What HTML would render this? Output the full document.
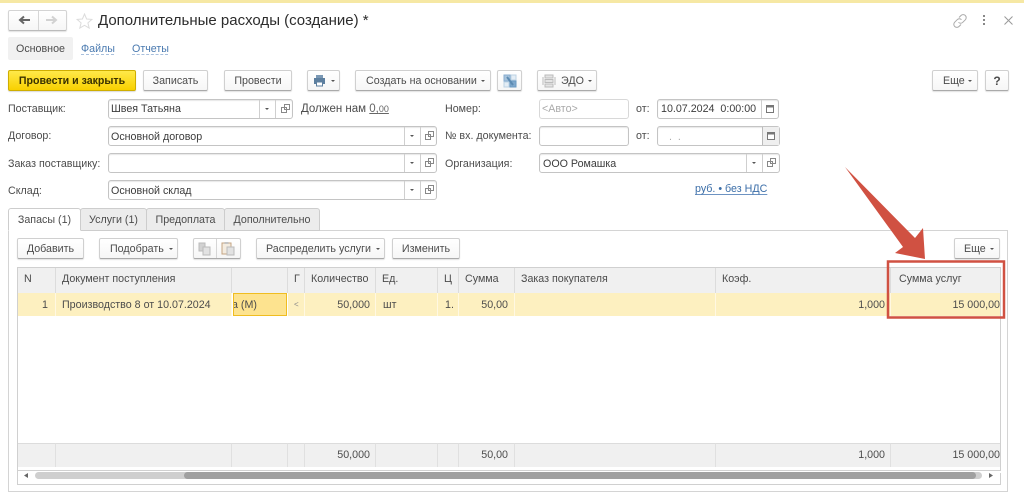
<!DOCTYPE html>
<html lang="ru"><head><meta charset="utf-8"><title>Дополнительные расходы</title>
<style>
html,body{margin:0;padding:0;background:#fff}
#p{position:relative;width:1024px;height:497px;overflow:hidden;background:#fff;font-family:"Liberation Sans",sans-serif;font-size:10.700px;color:#4c4c4c;filter:blur(.3px)}
#p div,#p svg{position:absolute;box-sizing:border-box}
.t{white-space:nowrap;line-height:14px}
.b{background:linear-gradient(#fff,#f6f6f6);border:1px solid #d0d0d0;border-bottom:1px solid #aaa;border-radius:2px;box-shadow:0 1px 1px rgba(0,0,0,.12);text-align:center;white-space:nowrap;color:#4c4c4c;line-height:21px}
.f{background:#fff;border:1px solid #c4c4c4;border-radius:3px;box-shadow:inset 0 1px 1px rgba(0,0,0,.1);color:#3c3c3c;white-space:nowrap;padding-left:2px;line-height:20px}
.sep{width:1px;background:#cfcfcf}
.tab{background:#ececec;border:1px solid #cdcdcd;border-radius:3px 3px 0 0;text-align:center;height:23px;top:208px;line-height:22px;color:#4c4c4c}
.h{background:#f0f0f0;top:268px;height:25px;line-height:22px;padding-left:6px;border-right:1px solid #dcdcdc;white-space:nowrap;color:#4c4c4c}
.r{background:#fdf0c0;top:293px;height:23px;line-height:24px;border-right:1px solid #fff8e2;white-space:nowrap;color:#4c4c4c}
.s{background:#f0f0f0;top:443px;height:24px;line-height:23px;border-top:1px solid #dcdcdc;border-right:1px solid #e0e0e0;white-space:nowrap;text-align:right;padding-right:4px;color:#4c4c4c}
.arr{width:0;height:0;border-left:2px solid transparent;border-right:2px solid transparent;border-top:2px solid #555}
</style></head><body><div id="p">
<div style="left:0;top:0;width:1024px;height:3px;background:#f6e8a4"></div>

<div class="b" style="left:8px;top:10px;width:59px;height:21px;border-color:#d4d4d4;border-bottom-color:#bbb"></div>
<div style="left:38px;top:11px;width:1px;height:19px;background:#d6d6d6"></div>
<svg style="left:17px;top:14px" width="14" height="12" viewBox="0 0 14 12"><path d="M13 6H4M7 2.500L3 6l4 3.500" fill="none" stroke="#666" stroke-width="2"/></svg>
<svg style="left:45px;top:14px" width="14" height="12" viewBox="0 0 14 12"><path d="M1 6h9M7 2.500L11 6 7 9.500" fill="none" stroke="#d2d2d2" stroke-width="2"/></svg>
<svg style="left:76px;top:13px" width="17" height="16" viewBox="0 0 17 16"><path d="M8.500 1l2.100 5 5.300.400-4 3.500 1.300 5.200-4.700-2.800-4.700 2.800 1.300-5.200-4-3.500 5.300-.4z" fill="#fff" stroke="#dcdcdc"/></svg>
<div class="t" style="left:98px;top:12px;font-size:15px;line-height:17px;color:#2c2c2c">Дополнительные расходы (создание) *</div>

<svg style="left:952px;top:13px" width="16" height="16" viewBox="0 0 16 16"><path d="M7 4.500l2-2a3 3 0 0 1 4.300 4.300l-2.500 2.500a3 3 0 0 1-4.300 0M9 11.500l-2 2A3 3 0 0 1 2.700 9.200l2.500-2.500a3 3 0 0 1 4.300 0" fill="none" stroke="#aaa" stroke-width="1"/></svg>
<div style="left:983px;top:15px;width:2px;height:2px;background:#888"></div>
<div style="left:983px;top:19px;width:2px;height:2px;background:#888"></div>
<div style="left:983px;top:23px;width:2px;height:2px;background:#888"></div>
<svg style="left:1003px;top:15px" width="11" height="11" viewBox="0 0 11 11"><path d="M1.500 1.500l8 8M9.500 1.500l-8 8" stroke="#999" fill="none"/></svg>

<div style="left:8px;top:37px;width:65px;height:23px;background:#f1f1f1;border-radius:2px"></div>
<div class="t" style="left:16px;top:42px">Основное</div>
<div class="t" style="left:81px;top:42px;color:#4a7ab0;text-decoration:underline dashed #a9c0dd;text-underline-offset:2px">Файлы</div>
<div class="t" style="left:132px;top:42px;color:#4a7ab0;text-decoration:underline dashed #a9c0dd;text-underline-offset:2px">Отчеты</div>

<div style="left:8px;top:70px;width:128px;height:21px;background:linear-gradient(#ffe94a,#f8d000);border:1px solid #cfae00;border-radius:2px;box-shadow:0 1px 1px rgba(0,0,0,.15);text-align:center;line-height:21px;font-weight:bold;color:#3a3200;font-size:10.600px;white-space:nowrap">Провести и закрыть</div>
<div class="b" style="left:143px;top:70px;width:65px;height:21px">Записать</div>
<div class="b" style="left:224px;top:70px;width:68px;height:21px">Провести</div>
<div class="b" style="left:307px;top:70px;width:33px;height:21px"></div>
<svg style="left:313px;top:74px" width="13" height="13" viewBox="0 0 13 13"><path d="M3 1h7v3H3z" fill="#7a98b4"/><path d="M1 4h11v6H1z" fill="#5d7f9f"/><path d="M3.500 8h6v4h-6z" fill="#fff" stroke="#5d7f9f"/></svg>
<div class="arr" style="left:331px;top:80px"></div>
<div class="b" style="left:355px;top:70px;width:136px;height:21px;text-align:left;padding-left:10px">Создать на основании</div>
<div class="arr" style="left:481px;top:80px"></div>
<div class="b" style="left:497px;top:70px;width:25px;height:21px"></div>
<svg style="left:503px;top:74px" width="14" height="14" viewBox="0 0 14 14"><path d="M1 1h6v6H1z" fill="#a8c4dc" stroke="#88add0"/><path d="M7 7h6v6H7z" fill="#7fa8cc" stroke="#6b9ac2"/><path d="M8 1h5v5H8zM1 8h5v5H1z" fill="#e4edf5" stroke="#bdd2e4"/><path d="M4 3l6 8" stroke="#5d8bb2" stroke-width="2"/></svg>
<div class="b" style="left:537px;top:70px;width:60px;height:21px;text-align:left;padding-left:23px">ЭДО</div>
<svg style="left:542px;top:74px" width="14" height="14" viewBox="0 0 14 14"><path d="M3 1h8v3H3zM3 5.500h8v3H3zM3 10h8v3H3z" fill="#e4e4e4" stroke="#bbb"/><path d="M1 3v8M13 3v8" stroke="#bbb"/></svg>
<div class="arr" style="left:588px;top:80px"></div>
<div class="b" style="left:932px;top:70px;width:46px;height:21px;text-align:left;padding-left:10px">Еще</div>
<div class="arr" style="left:968px;top:80px"></div>
<div class="b" style="left:985px;top:70px;width:24px;height:21px;font-weight:bold;font-size:12px">?</div>

<div class="t" style="left:8px;top:102px">Поставщик:</div>
<div class="t" style="left:8px;top:129px">Договор:</div>
<div class="t" style="left:8px;top:157px">Заказ поставщику:</div>
<div class="t" style="left:8px;top:184px">Склад:</div>

<div class="f" style="left:108px;top:99px;width:185px;height:20px;line-height:19px">Швея Татьяна</div>
<div class="f" style="left:108px;top:126px;width:329px;height:20px">Основной договор</div>
<div class="f" style="left:108px;top:153px;width:329px;height:20px"></div>
<div class="f" style="left:108px;top:180px;width:329px;height:20px">Основной склад</div>

<div class="sep" style="left:259px;top:100px;height:18px"></div><div class="sep" style="left:275px;top:100px;height:18px"></div>
<div class="arr" style="left:265px;top:108px"></div>
<svg style="left:281px;top:104px" width="9" height="9" viewBox="0 0 9 9"><path d="M3.500.5h5v5h-5zM.5 3.500h5v5h-5z" fill="#fff" stroke="#888"/></svg>

<div class="sep" style="left:404px;top:127px;height:18px"></div><div class="sep" style="left:420px;top:127px;height:18px"></div>
<div class="arr" style="left:410px;top:135px"></div>
<svg style="left:425px;top:131px" width="9" height="9" viewBox="0 0 9 9"><path d="M3.500.5h5v5h-5zM.5 3.500h5v5h-5z" fill="#fff" stroke="#888"/></svg>
<div class="sep" style="left:404px;top:154px;height:18px"></div><div class="sep" style="left:420px;top:154px;height:18px"></div>
<div class="arr" style="left:410px;top:162px"></div>
<svg style="left:425px;top:158px" width="9" height="9" viewBox="0 0 9 9"><path d="M3.500.5h5v5h-5zM.5 3.500h5v5h-5z" fill="#fff" stroke="#888"/></svg>
<div class="sep" style="left:404px;top:181px;height:18px"></div><div class="sep" style="left:420px;top:181px;height:18px"></div>
<div class="arr" style="left:410px;top:189px"></div>
<svg style="left:425px;top:185px" width="9" height="9" viewBox="0 0 9 9"><path d="M3.500.5h5v5h-5zM.5 3.500h5v5h-5z" fill="#fff" stroke="#888"/></svg>

<div class="t" style="left:301px;top:102px;font-size:11.500px">Должен нам <span style="text-decoration:underline;color:#666">0,<span style="font-size:9px">00</span></span></div>

<div class="t" style="left:445px;top:102px">Номер:</div>
<div class="t" style="left:445px;top:129px">№ вх. документа:</div>
<div class="t" style="left:445px;top:157px">Организация:</div>
<div class="t" style="left:636px;top:102px">от:</div>
<div class="t" style="left:636px;top:129px">от:</div>

<div class="f" style="left:539px;top:99px;width:90px;height:20px;line-height:19px;color:#aaa;border-color:#d8d8d8;box-shadow:none">&lt;Авто&gt;</div>
<div class="f" style="left:539px;top:126px;width:90px;height:20px"></div>
<div class="f" style="left:657px;top:99px;width:122px;height:20px;line-height:19px;padding-left:3px">10.07.2024&nbsp; 0:00:00</div>
<div class="sep" style="left:761px;top:100px;height:18px"></div>
<svg style="left:765px;top:104px" width="10" height="10" viewBox="0 0 10 10"><path d="M1.500 1.500h7v7h-7z" fill="#fff" stroke="#777"/><path d="M1.500 2.500h7" stroke="#777" stroke-width="2"/></svg>
<div class="f" style="left:657px;top:126px;width:123px;height:20px;line-height:21px;color:#aaa;padding-left:8px">&nbsp;.&nbsp;&nbsp;.</div>
<div class="sep" style="left:762px;top:127px;height:18px;background:#bbb"></div>
<div style="left:763px;top:127px;width:16px;height:18px;background:#efefef"></div>
<svg style="left:766px;top:131px" width="10" height="10" viewBox="0 0 10 10"><path d="M1.500 1.500h7v7h-7z" fill="#fff" stroke="#777"/><path d="M1.500 2.500h7" stroke="#777" stroke-width="2"/></svg>
<div class="f" style="left:539px;top:153px;width:241px;height:20px;padding-left:3px">ООО Ромашка</div>
<div class="sep" style="left:746px;top:154px;height:18px"></div><div class="sep" style="left:762px;top:154px;height:18px"></div>
<div class="arr" style="left:752px;top:162px"></div>
<svg style="left:767px;top:158px" width="9" height="9" viewBox="0 0 9 9"><path d="M3.500.5h5v5h-5zM.5 3.500h5v5h-5z" fill="#fff" stroke="#888"/></svg>
<div class="t" style="left:695px;top:182px;color:#3b6ea8;text-decoration:underline #6d93c2;text-underline-offset:2px">руб. • без НДС</div>

<div style="left:8px;top:230px;width:1000px;height:262px;border:1px solid #d4d4d4;background:#fff"></div>
<div class="tab" style="left:8px;width:73px;background:#fff;border-bottom:1px solid #fff;z-index:2">Запасы (1)</div>
<div class="tab" style="left:80px;width:67px">Услуги (1)</div>
<div class="tab" style="left:146px;width:79px">Предоплата</div>
<div class="tab" style="left:224px;width:96px">Дополнительно</div>

<div class="b" style="left:17px;top:238px;width:67px;height:21px">Добавить</div>
<div class="b" style="left:99px;top:238px;width:79px;height:21px;text-align:left;padding-left:10px">Подобрать</div>
<div class="arr" style="left:169px;top:248px"></div>
<div class="b" style="left:193px;top:238px;width:48px;height:21px"></div>
<div style="left:216px;top:239px;width:1px;height:19px;background:#d6d6d6"></div>
<svg style="left:198px;top:242px" width="14" height="14" viewBox="0 0 14 14"><path d="M1 1h6v8H1z" fill="#d2d2d2" stroke="#bbb"/><path d="M5 5h7v8H5z" fill="#e2e2e2" stroke="#bbb"/></svg>
<svg style="left:221px;top:241px" width="14" height="15" viewBox="0 0 14 15"><path d="M1 2h9v11H1z" fill="#f4ece0" stroke="#c4a482"/><path d="M3.500 1h4v2h-4z" fill="#c4c4c4"/><path d="M6 6h7v8H6z" fill="#e2e2e2" stroke="#bbb"/></svg>
<div class="b" style="left:256px;top:238px;width:129px;height:21px;text-align:left;padding-left:9px">Распределить услуги</div>
<div class="arr" style="left:376px;top:248px"></div>
<div class="b" style="left:392px;top:238px;width:68px;height:21px">Изменить</div>
<div class="b" style="left:954px;top:238px;width:46px;height:21px;text-align:left;padding-left:9px">Еще</div>
<div class="arr" style="left:990px;top:248px"></div>

<div style="left:17px;top:267px;width:984px;height:204px;border:1px solid #d0d0d0;border-right:0;background:#fff"></div>
<div style="left:1000px;top:267px;width:1px;height:218px;background:#d0d0d0"></div>
<div style="left:17px;top:471px;width:984px;height:2px;background:#fff"></div>
<div style="left:17px;top:484px;width:984px;height:1px;background:#d0d0d0"></div>
<div style="left:17px;top:267px;width:1px;height:218px;background:#d0d0d0"></div>

<div class="h" style="left:18px;width:38px">N</div>
<div class="h" style="left:56px;width:176px">Документ поступления</div>
<div class="h" style="left:232px;width:56px"></div>
<div class="h" style="left:288px;width:17px;padding-left:6px">Г</div>
<div class="h" style="left:305px;width:71px">Количество</div>
<div class="h" style="left:376px;width:62px">Ед.</div>
<div class="h" style="left:438px;width:21px">Ц</div>
<div class="h" style="left:459px;width:56px">Сумма</div>
<div class="h" style="left:515px;width:201px">Заказ покупателя</div>
<div class="h" style="left:716px;width:175px">Коэф.</div>
<div class="h" style="left:891px;width:109px;border-right:0;padding-left:8px">Сумма услуг</div>

<div class="r" style="left:18px;width:38px;text-align:right;padding-right:7px">1</div>
<div class="r" style="left:56px;width:176px;padding-left:6px">Производство 8 от 10.07.2024</div>
<div class="r" style="left:233px;width:54px;background:#fde38f;border:1px solid #f0bd20;line-height:22px;overflow:hidden"><span style="position:absolute;left:-2px">а (М)</span></div>
<div class="r" style="left:288px;width:17px;padding-left:6px;color:#888;font-size:8px">&lt;</div>
<div class="r" style="left:305px;width:71px;text-align:right;padding-right:5px">50,000</div>
<div class="r" style="left:376px;width:62px;padding-left:7px">шт</div>
<div class="r" style="left:438px;width:21px;padding-left:7px">1.</div>
<div class="r" style="left:459px;width:56px;text-align:right;padding-right:6px">50,00</div>
<div class="r" style="left:515px;width:201px"></div>
<div class="r" style="left:716px;width:175px;text-align:right;padding-right:5px">1,000</div>
<div class="r" style="left:891px;width:109px;text-align:right;padding-right:0;border-right:0">15 000,00</div>

<div class="s" style="left:18px;width:38px"></div>
<div class="s" style="left:56px;width:176px"></div>
<div class="s" style="left:232px;width:56px"></div>
<div class="s" style="left:288px;width:17px"></div>
<div class="s" style="left:305px;width:71px;padding-right:5px">50,000</div>
<div class="s" style="left:376px;width:62px"></div>
<div class="s" style="left:438px;width:21px"></div>
<div class="s" style="left:459px;width:56px;padding-right:6px">50,00</div>
<div class="s" style="left:515px;width:201px"></div>
<div class="s" style="left:716px;width:175px;padding-right:5px">1,000</div>
<div class="s" style="left:891px;width:109px;padding-right:0;border-right:0">15 000,00</div>

<svg style="left:24px;top:473px" width="4" height="5" viewBox="0 0 4 5"><path d="M4 0v5L0 2.500z" fill="#666"/></svg>
<svg style="left:989px;top:473px" width="4" height="5" viewBox="0 0 4 5"><path d="M0 0v5l4-2.500z" fill="#666"/></svg>
<div style="left:35px;top:472px;width:947px;height:7px;background:#cfcfcf;border-radius:4px"></div>
<div style="left:184px;top:472px;width:792px;height:7px;background:#a0a0a0;border-radius:4px"></div>

<svg style="left:0;top:0;z-index:5" width="1024" height="497" viewBox="0 0 1024 497">
<path d="M845 167L915 238 923 228 925 259 895 253 903 247z" fill="#d05142"/>
<rect x="888" y="261.500" width="116" height="56" fill="none" stroke="#d05142" stroke-width="2.500"/>
</svg>
</div></body></html>
